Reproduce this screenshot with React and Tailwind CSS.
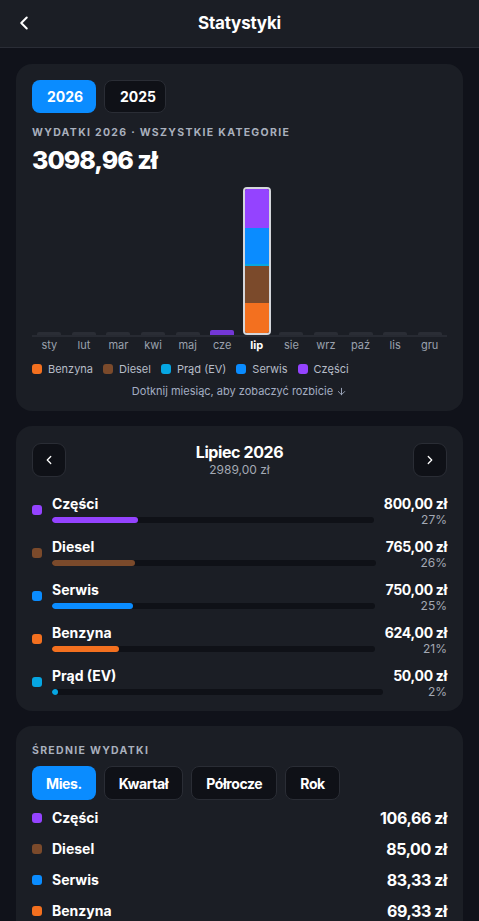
import React, { useState } from "react";
import { ChevronLeft, ChevronRight, ArrowDown } from "lucide-react";

const COLORS = {
  benzyna: "#f3701f",
  diesel: "#7b4a2b",
  prad: "#06a6e2",
  serwis: "#0a8cff",
  czesci: "#9443ff",
};

const LEGEND = [
  { key: "benzyna", label: "Benzyna" },
  { key: "diesel", label: "Diesel" },
  { key: "prad", label: "Prąd (EV)" },
  { key: "serwis", label: "Serwis" },
  { key: "czesci", label: "Części" },
];

const MONTHS = ["sty", "lut", "mar", "kwi", "maj", "cze", "lip", "sie", "wrz", "paź", "lis", "gru"];

// stacked values per month, bottom to top
const monthData = {
  5: [{ key: "czesci", value: 109.96 }],
  6: [
    { key: "benzyna", value: 624 },
    { key: "diesel", value: 765 },
    { key: "prad", value: 50 },
    { key: "serwis", value: 750 },
    { key: "czesci", value: 800 },
  ],
};

const julyRows = [
  { key: "czesci", label: "Części", value: "800,00 zł", pct: "27%", amount: 800 },
  { key: "diesel", label: "Diesel", value: "765,00 zł", pct: "26%", amount: 765 },
  { key: "serwis", label: "Serwis", value: "750,00 zł", pct: "25%", amount: 750 },
  { key: "benzyna", label: "Benzyna", value: "624,00 zł", pct: "21%", amount: 624 },
  { key: "prad", label: "Prąd (EV)", value: "50,00 zł", pct: "2%", amount: 50 },
];

const averages = [
  { key: "czesci", label: "Części", value: "106,66 zł" },
  { key: "diesel", label: "Diesel", value: "85,00 zł" },
  { key: "serwis", label: "Serwis", value: "83,33 zł" },
  { key: "benzyna", label: "Benzyna", value: "69,33 zł" },
];

const PX_PER_ZL = 0.0486;

function Dot({ color, className = "" }) {
  return <span className={`inline-block w-[10px] h-[10px] rounded-[3px] shrink-0 ${className}`} style={{ backgroundColor: color }} />;
}

function Chart() {
  return (
    <div className="mt-[10px]">
      <div className="grid grid-cols-12 h-[150px] items-end border-b-2 border-[#272a32]">
        {MONTHS.map((m, i) => {
          const segs = monthData[i];
          if (!segs) {
            return (
              <div key={m} className="flex justify-center">
                <div className="w-[24px] h-[3px] rounded-t-[2px] bg-[#2a2d35]" />
              </div>
            );
          }
          const selected = i === 6;
          return (
            <div key={m} className="flex justify-center">
              <div
                className={`flex flex-col-reverse w-[24px] overflow-hidden ${
                  selected ? "box-content border-2 border-[#d4d6db] rounded-[4px]" : "rounded-t-[2px]"
                }`}
              >
                {segs.map((s) => (
                  <div key={s.key} style={{ height: Math.round(s.value * PX_PER_ZL), backgroundColor: s.key === "czesci" && !selected ? "#7337d6" : COLORS[s.key] }} />
                ))}
              </div>
            </div>
          );
        })}
      </div>
      <div className="grid grid-cols-12">
        {MONTHS.map((m, i) => (
          <div key={m} className={`text-center text-[11px] leading-4 ${i === 6 ? "text-white font-bold" : "text-[#9aa1ad]"}`}>
            {m}
          </div>
        ))}
      </div>
    </div>
  );
}

export default function App() {
  const [year, setYear] = useState(2026);
  const [period, setPeriod] = useState("Mies.");

  return (
    <div className="min-h-screen bg-[#10121a] text-white" style={{ fontFamily: "Inter, 'Noto Sans', sans-serif" }}>
      <header className="relative h-[48px] flex items-center justify-center bg-[#1b1e25] border-b border-[#2a2d36]">
        <button className="absolute left-[13px] top-[12px] text-white">
          <ChevronLeft size={22} strokeWidth={2.2} />
        </button>
        <h1 className="text-[17px] font-bold tracking-[-0.2px]">Statystyki</h1>
      </header>

      <main className="px-4 pt-4 space-y-[15px]">
        {/* yearly chart */}
        <section className="bg-[#1b1e25] rounded-[16px] p-4 pb-[12px]">
          <div className="flex gap-2">
            {[2026, 2025].map((y) => (
              <button
                key={y}
                onClick={() => setYear(y)}
                className={`h-[33px] px-[15px] rounded-[8px] text-[14px] font-bold ${
                  year === y ? "bg-[#0a8cff] w-[64px]" : "bg-[#0f1117] border border-[#2a2d35] w-[62px]"
                }`}
              >
                {y}
              </button>
            ))}
          </div>
          <p className="mt-[13px] text-[10.5px] font-bold tracking-[1.3px] text-[#a9b0bd] leading-[14px]">
            WYDATKI 2026 · WSZYSTKIE KATEGORIE
          </p>
          <p className="mt-[3px] text-[25px] font-extrabold tracking-[-1px] leading-[34px]">3098,96 zł</p>

          <Chart />

          <div className="flex items-center gap-[10px] mt-[8px] text-[11px] leading-4 text-[#b6bcc7]">
            {LEGEND.map((l) => (
              <div key={l.key} className="flex items-center gap-[6px]">
                <Dot color={COLORS[l.key]} />
                <span>{l.label}</span>
              </div>
            ))}
          </div>
          <p className="mt-[6px] flex items-center justify-center gap-[3px] text-[11px] leading-4 text-[#a3adc2]">
            Dotknij miesiąc, aby zobaczyć rozbicie <ArrowDown size={11} strokeWidth={2} />
          </p>
        </section>

        {/* month breakdown */}
        <section className="bg-[#1b1e25] rounded-[16px] p-4 pb-[12px]">
          <div className="flex items-center justify-between">
            <button className="w-[34px] h-[34px] rounded-[9px] bg-[#0f1117] border border-[#2a2d35] flex items-center justify-center">
              <ChevronLeft size={14} strokeWidth={2.2} />
            </button>
            <div className="text-center">
              <p className="text-[16px] font-bold leading-[20px] tracking-[-0.4px]">Lipiec 2026</p>
              <p className="text-[12px] text-[#a3a9b4] leading-[16px]">2989,00 zł</p>
            </div>
            <button className="w-[34px] h-[34px] rounded-[9px] bg-[#0f1117] border border-[#2a2d35] flex items-center justify-center">
              <ChevronRight size={14} strokeWidth={2.2} />
            </button>
          </div>

          <div className="mt-[17px] space-y-[11px]">
            {julyRows.map((r) => (
              <div key={r.key} className="flex items-start">
                <Dot color={COLORS[r.key]} className="mt-[10px]" />
                <div className="flex-1 ml-[10px]">
                  <p className="text-[14px] font-bold leading-[18px]">{r.label}</p>
                  <div className="mt-[4px] h-[6px] rounded-full bg-[#0f1117] overflow-hidden">
                    <div className="h-full rounded-full" style={{ width: `${(r.amount / 2989) * 100}%`, backgroundColor: COLORS[r.key] }} />
                  </div>
                </div>
                <div className="ml-[10px] text-right">
                  <p className="text-[14px] font-bold leading-[18px] tracking-[-0.3px]">{r.value}</p>
                  <p className="text-[12px] text-[#a3a9b4] leading-[14px]">{r.pct}</p>
                </div>
              </div>
            ))}
          </div>
        </section>

        {/* averages */}
        <section className="bg-[#1b1e25] rounded-[16px] p-4">
          <p className="mt-[2px] text-[10.5px] font-bold tracking-[1.3px] text-[#a9b0bd] leading-[14px]">ŚREDNIE WYDATKI</p>
          <div className="flex gap-2 mt-[8px]">
            {["Mies.", "Kwartał", "Półrocze", "Rok"].map((p) => (
              <button
                key={p}
                onClick={() => setPeriod(p)}
                className={`h-[34px] px-[14px] rounded-[8px] text-[14px] font-bold tracking-[-0.4px] ${
                  period === p ? "bg-[#0a8cff]" : "bg-[#0f1117] border border-[#2a2d35]"
                }`}
              >
                {p}
              </button>
            ))}
          </div>
          <div className="mt-[2px]">
            {averages.map((a) => (
              <div key={a.key} className="flex items-center h-[31px]">
                <Dot color={COLORS[a.key]} />
                <span className="ml-[10px] flex-1 text-[14px] font-bold">{a.label}</span>
                <span className="text-[16px] font-bold tracking-[-0.4px]">{a.value}</span>
              </div>
            ))}
          </div>
        </section>
      </main>
    </div>
  );
}
